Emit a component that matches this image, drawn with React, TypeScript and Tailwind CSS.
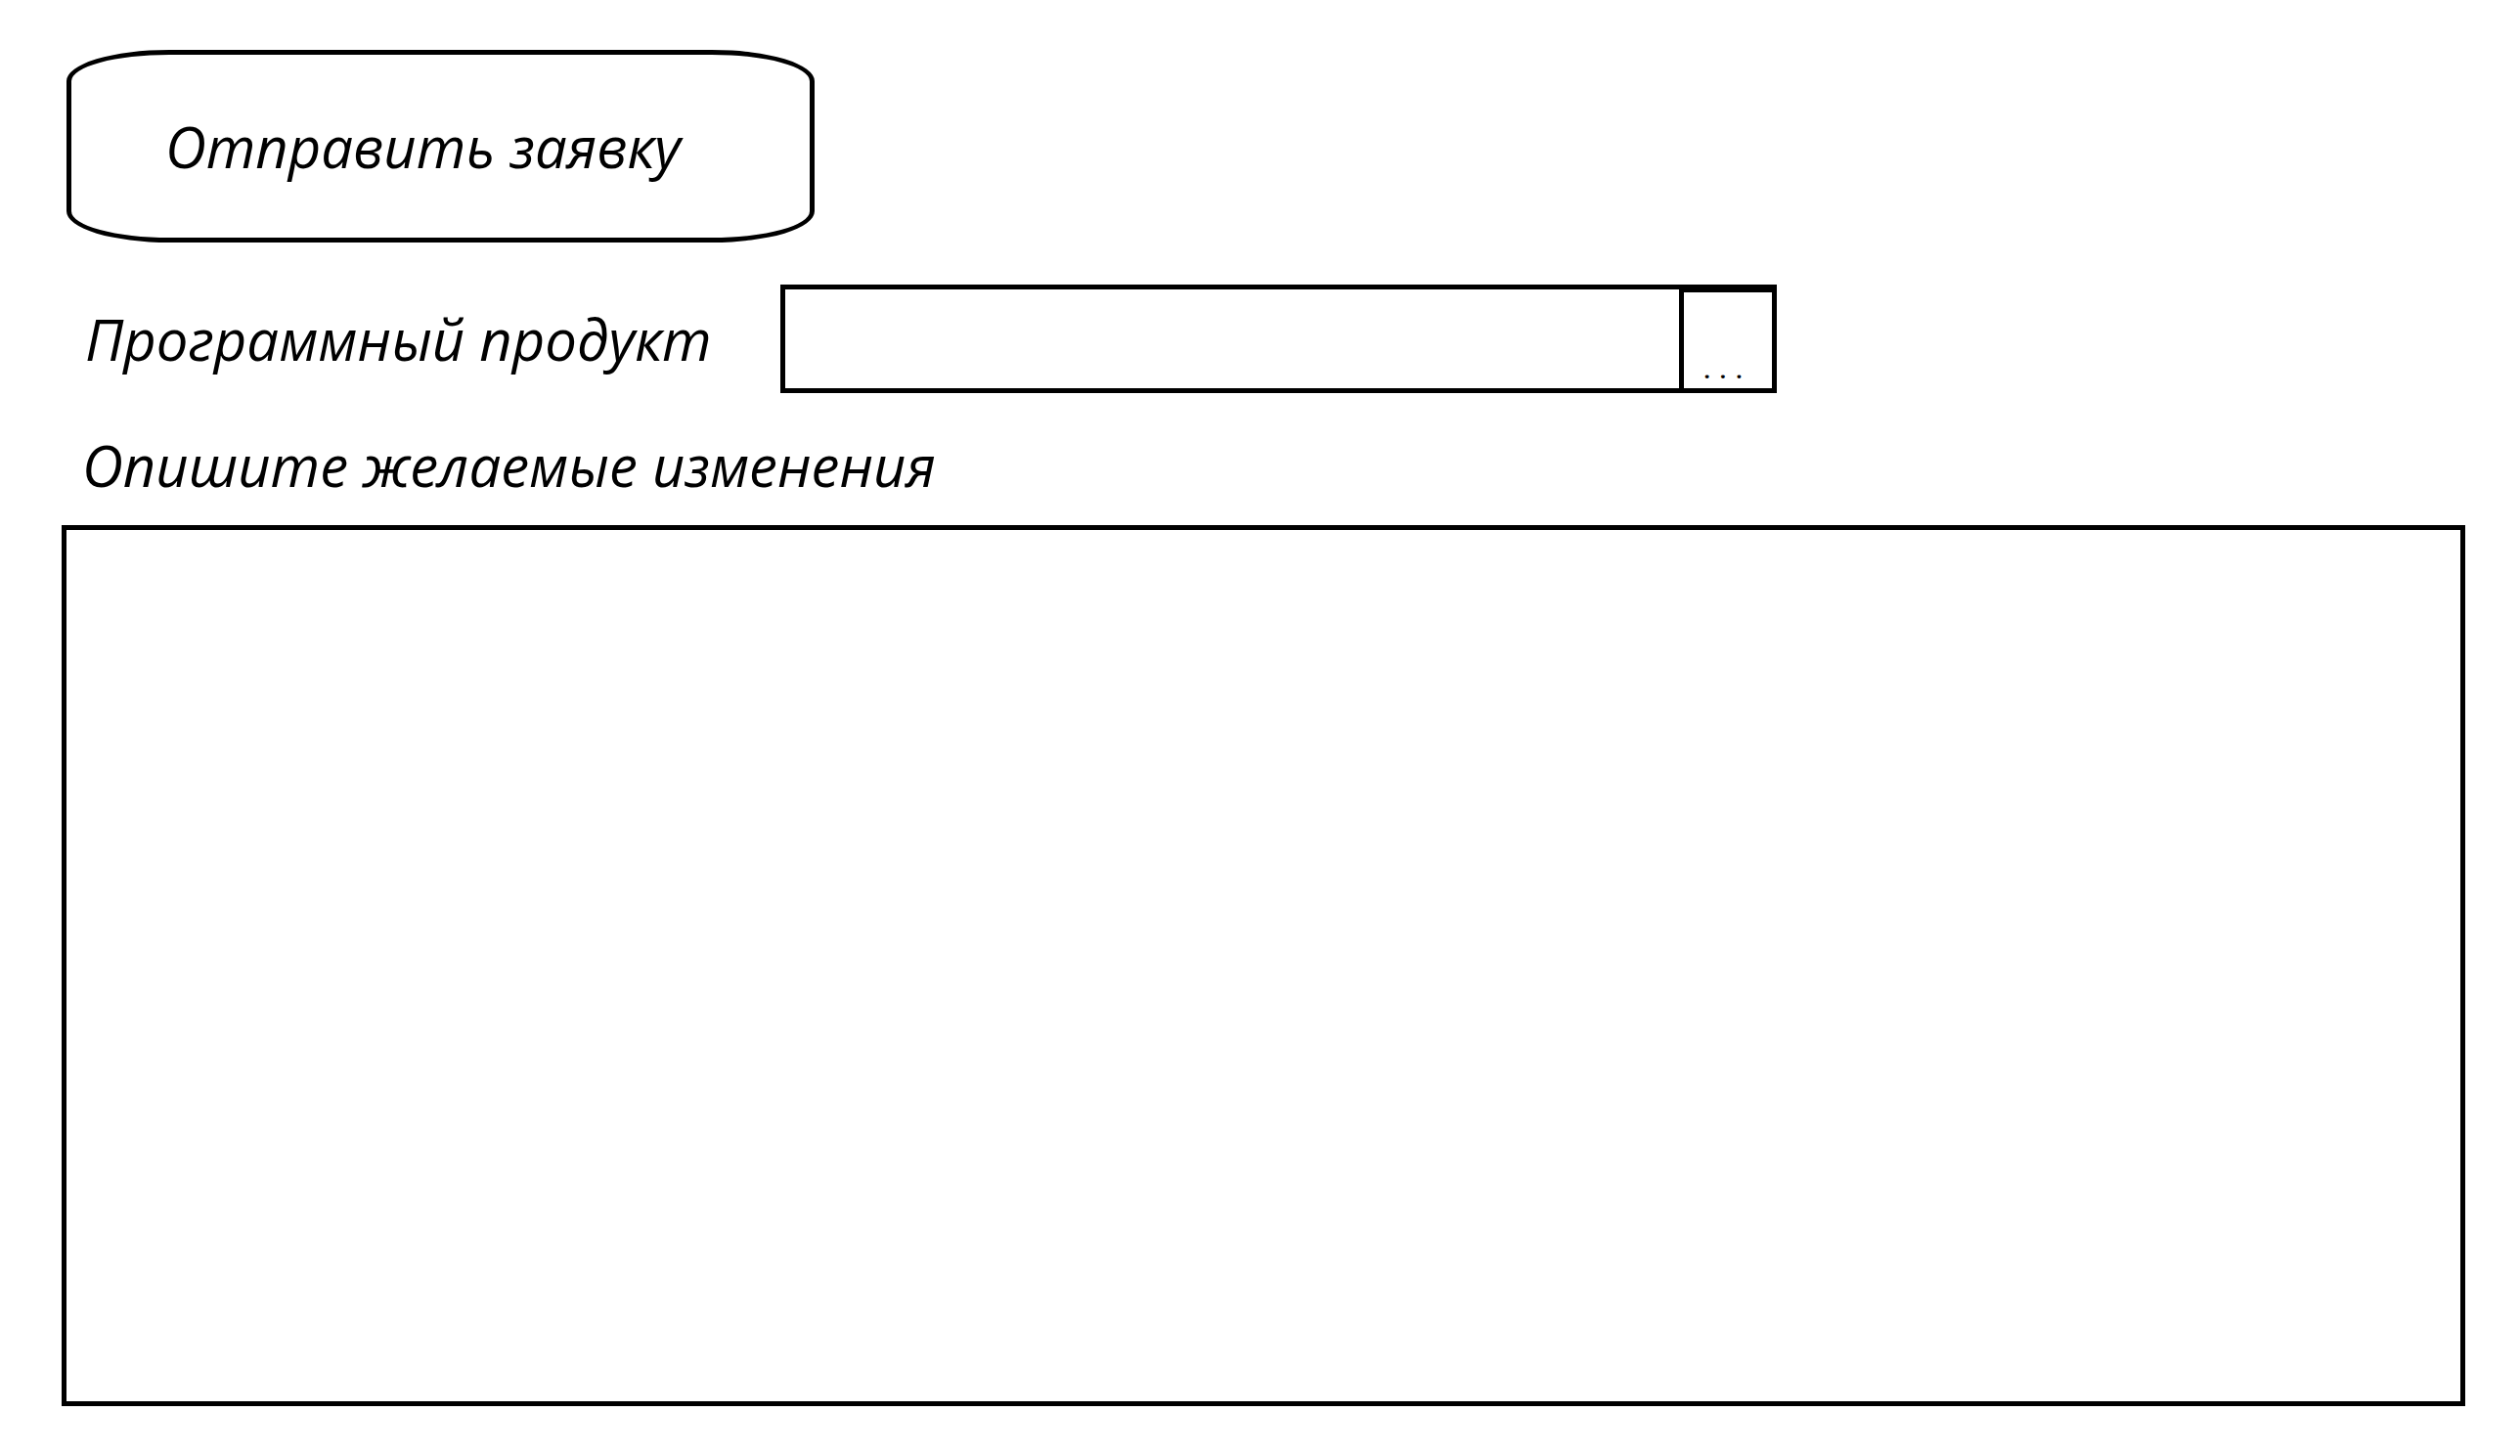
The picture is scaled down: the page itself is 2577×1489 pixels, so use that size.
export default function App() {
  return (
    <div className="min-h-screen bg-white text-black font-['Open_Sans',sans-serif] italic">
      <div className="pt-[51px] pl-[68px]">
        <button
          type="button"
          className="flex h-[197px] w-[765px] items-center rounded-[105px/32px] border-[5px] border-black bg-white pl-[96px] text-[58px] italic text-black"
        >
          Отправить заявку
        </button>
      </div>

      <div className="mt-[43px] flex items-center">
        <span className="w-[798px] shrink-0 whitespace-nowrap pl-[87px] text-[58px] leading-none">
          Программный продукт
        </span>
        <div className="flex h-[111px] w-[1019px] border-[5px] border-black">
          <input className="min-w-0 flex-1 bg-white px-3 text-[40px] outline-none" />
          <button
            type="button"
            className="-my-[5px] -mr-[5px] flex w-[100px] items-end justify-center border-[5px] border-t-[8px] border-black bg-white pb-2 text-[22px] font-bold not-italic leading-none tracking-[10px]"
          >
            ...
          </button>
        </div>
      </div>

      <div className="mt-[45px] pl-[84px] text-[58px] leading-none">Опишите желаемые изменения</div>

      <div className="mt-[32px] pl-[63px]">
        <textarea className="block h-[901px] w-[2458px] resize-none border-[5px] border-black bg-white p-4 text-[40px] outline-none" />
      </div>
    </div>
  );
}
